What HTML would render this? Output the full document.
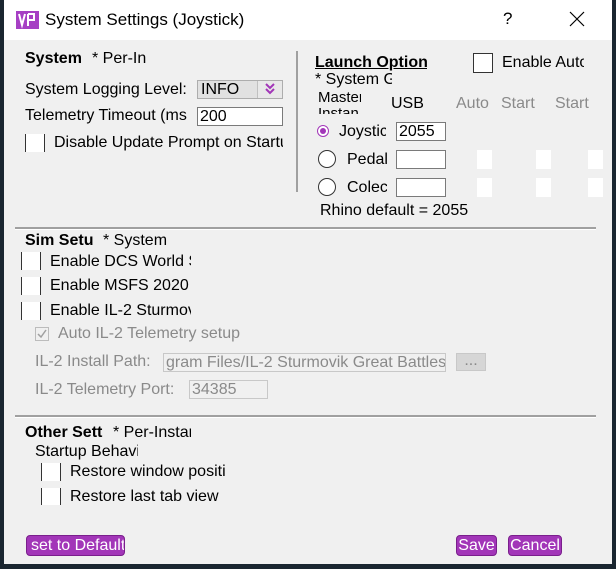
<!DOCTYPE html>
<html><head><meta charset="utf-8"><style>
*{margin:0;padding:0;box-sizing:border-box}
body{width:616px;height:569px;background:#1a2630;position:relative;overflow:hidden;font-family:"Liberation Sans",sans-serif;font-size:16px;color:#000}
.a{position:absolute;white-space:nowrap;overflow:hidden;line-height:18px}
#win{position:absolute;left:4px;top:0;width:608px;height:564px;background:#f0f0f0}
#tb{position:absolute;left:4px;top:0;width:608px;height:40px;background:#fff}
.b{font-weight:bold}
.cb{position:absolute;background:#fff;border-left:1px solid #333;border-right:1px solid #333;width:20px;height:18px}
.cb2{position:absolute;background:#fff;border:1px solid #333;width:20px;height:20px}
.in{position:absolute;background:#fff;border:1px solid #7a7a7a;height:19px;line-height:17px;padding-left:2px;overflow:hidden;white-space:nowrap}
.sq{position:absolute;background:#fff;width:15px;height:19px}
.g{color:#8a8a8a}
.sep{position:absolute;height:3px;background:#a0a0a0;border-bottom:1px solid #fff}
.btn{position:absolute;background:#a236b8;color:#fff;border:1px solid #7a1f8c;border-radius:4px;height:21px;line-height:19px;text-align:center;overflow:hidden;white-space:nowrap;font-size:16px}
.rad{position:absolute;width:18px;height:18px;border-radius:50%;border:1px solid #333;background:#fff}
</style></head><body>
<div id="win"></div>
<div id="tb"></div>
<svg style="position:absolute;left:16px;top:11px" width="23" height="18"><rect width="23" height="18" fill="#a63fc4"/><path d="M3 3 L6 14 L9 3 M12 3 V15 M12 3 H18 V9 H12" stroke="#fff" stroke-width="2" fill="none"/></svg>
<div class="a" style="left:45px;top:9px;font-size:17px;line-height:22px">System Settings (Joystick)</div>
<div class="a" style="left:503px;top:9px;font-size:17px;line-height:20px">?</div>
<svg style="position:absolute;left:569px;top:11px" width="16" height="16"><path d="M1 1L15 15M15 1L1 15" stroke="#000" stroke-width="1.2"/></svg>

<div class="a b" style="left:25px;top:50px">System</div>
<div class="a" style="left:92px;top:50px">* Per-In</div>
<div class="a" style="left:25px;top:81px">System Logging Level:</div>
<div style="position:absolute;left:197px;top:80px;width:86px;height:19px;background:#e1e1e1;border:1px solid #adadad"></div>
<div class="a" style="left:201px;top:81px">INFO</div>
<div style="position:absolute;left:257px;top:81px;width:25px;height:17px;background:#e8e8e8;border-left:1px solid #c0c0c0"></div>
<svg style="position:absolute;left:264px;top:83px" width="12" height="12"><path d="M2 1L6 5L10 1M2 6L6 10L10 6" stroke="#a236b8" stroke-width="2" fill="none"/></svg>
<div class="a" style="left:25px;top:107px;width:163px">Telemetry Timeout (ms</div>
<div class="in" style="left:197px;top:107px;width:86px">200</div>
<div class="cb" style="left:25px;top:134px"></div>
<div class="a" style="left:54px;top:134px;width:229px">Disable Update Prompt on Startup</div>
<div style="position:absolute;left:296px;top:51px;width:2px;height:141px;background:#a0a0a0"></div>

<div class="a b" style="left:315px;top:54px;width:112px;text-decoration:underline">Launch Options</div>
<div class="cb2" style="left:473px;top:53px"></div>
<div class="a" style="left:502px;top:54px;width:82px">Enable Auto</div>
<div class="a" style="left:315px;top:71px;width:77px">* System Global</div>
<div class="a" style="left:318px;top:90px;width:43px;height:24px;line-height:16px;white-space:normal;font-size:15px">Master Instan</div>
<div class="a" style="left:391px;top:95px;width:50px;height:19px">USB</div>
<div class="a g" style="left:456px;top:95px;height:19px">Auto</div>
<div class="a g" style="left:501px;top:95px;height:19px">Start</div>
<div class="a g" style="left:555px;top:95px;height:19px">Start</div>
<div style="position:absolute;left:317px;top:125px;width:12px;height:12px;border-radius:50%;border:1px solid #a236b8;background:#fff"></div>
<div style="position:absolute;left:320px;top:128px;width:6px;height:6px;border-radius:50%;background:#a236b8"></div>
<div class="a" style="left:339px;top:123px;width:47px">Joystick</div>
<div class="in" style="left:396px;top:122px;width:50px;font-size:16px">2055</div>
<div class="rad" style="left:318px;top:150px"></div>
<div class="a" style="left:347px;top:151px;width:40px">Pedals</div>
<div class="in" style="left:396px;top:150px;width:50px"></div>
<div class="sq" style="left:477px;top:150px"></div><div class="sq" style="left:536px;top:150px"></div><div class="sq" style="left:588px;top:150px"></div>
<div class="rad" style="left:318px;top:178px"></div>
<div class="a" style="left:347px;top:179px;width:40px">Colective</div>
<div class="in" style="left:396px;top:178px;width:50px"></div>
<div class="sq" style="left:477px;top:178px"></div><div class="sq" style="left:536px;top:178px"></div><div class="sq" style="left:588px;top:178px"></div>
<div class="a" style="left:320px;top:202px">Rhino default = 2055</div>
<div class="sep" style="left:15px;top:227px;width:581px"></div>

<div class="a b" style="left:25px;top:232px;width:68px">Sim Setup</div>
<div class="a" style="left:103px;top:232px">* System</div>
<div class="cb" style="left:21px;top:252px"></div>
<div class="a" style="left:50px;top:253px;width:141px">Enable DCS World Sim</div>
<div class="cb" style="left:21px;top:277px"></div>
<div class="a" style="left:50px;top:277px;width:141px">Enable MSFS 2020 Sim</div>
<div class="cb" style="left:21px;top:302px"></div>
<div class="a" style="left:50px;top:302px;width:141px">Enable IL-2 Sturmovik</div>
<svg style="position:absolute;left:35px;top:327px" width="14" height="14"><rect x=".5" y=".5" width="13" height="13" fill="#f0f0f0" stroke="#bcbcbc"/><path d="M3 7L6 10L11 3" stroke="#a0a0a0" stroke-width="1.5" fill="none"/></svg>
<div class="a g" style="left:58px;top:325px">Auto IL-2 Telemetry setup</div>
<div class="a g" style="left:35px;top:353px">IL-2 Install Path:</div>
<div class="in g" style="left:163px;top:353px;width:283px;border-color:#c8c8c8;background:#f0f0f0">gram Files/IL-2 Sturmovik Great Battles</div>
<div style="position:absolute;left:456px;top:353px;width:30px;height:18px;background:#d6d6d6;border:1px solid #c8c8c8;color:#888;text-align:center;line-height:14px">...</div>
<div class="a g" style="left:35px;top:381px">IL-2 Telemetry Port:</div>
<div class="in g" style="left:189px;top:380px;width:79px;border-color:#c8c8c8;background:#f0f0f0">34385</div>
<div class="sep" style="left:15px;top:415px;width:581px"></div>

<div class="a b" style="left:25px;top:424px;width:78px">Other Settings</div>
<div class="a" style="left:113px;top:424px;width:78px">* Per-Instance</div>
<div class="a" style="left:35px;top:443px;width:103px;height:17px">Startup Behavior</div>
<div class="cb" style="left:41px;top:463px"></div>
<div class="a" style="left:70px;top:463px;width:156px">Restore window position</div>
<div class="cb" style="left:41px;top:488px;height:17px"></div>
<div class="a" style="left:70px;top:488px">Restore last tab view</div>

<div class="btn" style="left:26px;top:535px;width:99px;text-align:left;padding-left:4px">set to Default</div>
<div class="btn" style="left:456px;top:535px;width:41px">Save</div>
<div class="btn" style="left:508px;top:535px;width:54px">Cancel</div>
</body></html>
